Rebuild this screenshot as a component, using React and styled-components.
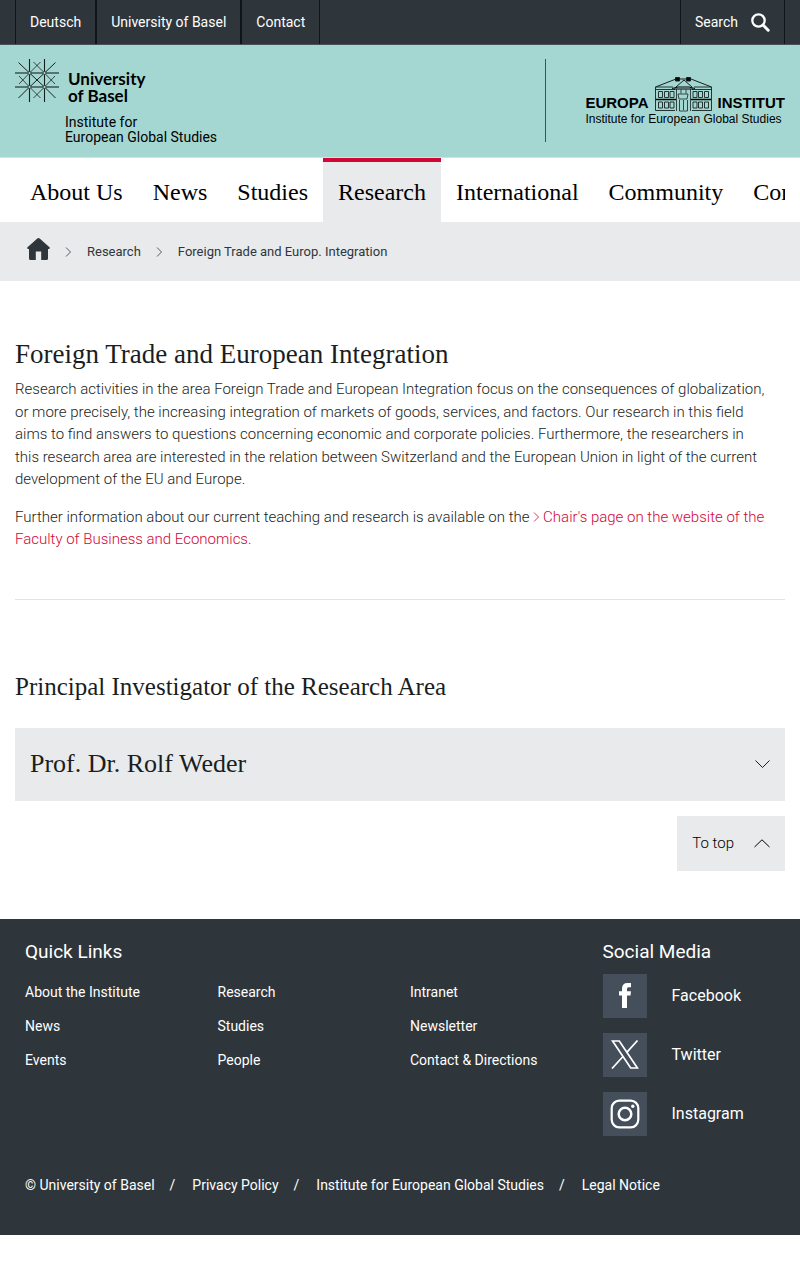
import React from "react";
import styled, { createGlobalStyle } from "styled-components";

const sans = `Roboto, "Liberation Sans", sans-serif`;
const serif = `"Liberation Serif", serif`;

const Global = createGlobalStyle`
  *, *::before, *::after { box-sizing: border-box; }
  body { margin: 0; background: #fff; color: #1a1e21; font-family: ${sans}; }
  a { color: inherit; text-decoration: none; }
  button { font: inherit; color: inherit; border: 0; background: none; padding: 0; cursor: pointer; }
  h1, h2, p, ul { margin: 0; padding: 0; }
  ul { list-style: none; }
  svg { display: block; flex: none; }
`;

const TopBar = styled.div`
  display: flex;
  justify-content: space-between;
  height: 45px;
  padding: 0 15px;
  background: #2e363c;
  border-bottom: 1px solid #465257;
  color: #fff;
  font-size: 14px;
`;

const TopLinks = styled.nav`
  display: flex;
`;

const TopLink = styled.a`
  display: flex;
  align-items: center;
  padding: 0 14px;
  border: solid #101417;
  border-width: 0 1px;
`;

const SearchButton = styled.button`
  display: flex;
  align-items: center;
  gap: 13px;
  padding: 0 14px;
  && {
    border: solid #101417;
    border-width: 0 1px;
  }
`;

const Header = styled.header`
  display: flex;
  justify-content: space-between;
  align-items: flex-start;
  height: 113px;
  padding: 14px 15px 0;
  background: #a4d7d2;
  border-bottom: 1px solid #c9e7e4;
  color: #000;
`;

const UniName = styled.a`
  display: flex;
  align-items: flex-start;
  gap: 9px;
  font: 700 17px/17px Lato, ${sans};
  span { padding-top: 11px; }
`;

const UniUnit = styled.a`
  display: block;
  margin: 11px 0 0 50px;
  font-size: 14px;
  line-height: 15px;
`;

const Institute = styled.a`
  display: block;
  height: 83px;
  padding: 18px 0 0 39px;
  border-left: 1px solid #3d5553;
  font-family: "Liberation Sans", sans-serif;
`;

const InstituteMark = styled.div`
  display: flex;
  align-items: flex-end;
  gap: 6px;
  font-size: 15px;
  font-weight: 700;
  line-height: 18px;
`;

const InstituteSub = styled.div`
  font-size: 12px;
  line-height: 14px;
`;

const MainNav = styled.nav`
  display: flex;
  height: 64px;
  margin: 0 15px;
  overflow: hidden;
`;

const NavItem = styled.a`
  display: flex;
  align-items: center;
  flex: none;
  padding: 0 15px;
  border-top: 4px solid ${(p) => (p.$active ? "#d20537" : "transparent")};
  background: ${(p) => (p.$active ? "#e9eaec" : "transparent")};
  && { color: #000; }
  font: 24px/30px ${serif};
`;

const Breadcrumb = styled.nav`
  display: flex;
  align-items: center;
  gap: 15px;
  height: 59px;
  padding: 0 27px;
  background: #e9eaec;
  color: #2e363c;
  font-size: 13px;
`;

const HomeLink = styled.a`
  padding-bottom: 5px;
`;

const Main = styled.main`
  padding: 58px 15px 48px;
`;

const Title = styled.h1`
  font: 400 27px/30px ${serif};
`;

const Subtitle = styled.h2`
  font: 400 25px/30px ${serif};
`;

const Text = styled.p`
  && { margin-top: ${(p) => p.$top}px; padding-right: 15px; }
  font-size: 15px;
  font-weight: 300;
  line-height: 1.5;
`;

const TextLink = styled.a`
  && { color: #d20537; }
  svg { display: inline-block; margin-right: 3px; }
`;

const Rule = styled.hr`
  margin: 48px 0 72px;
  border: 0;
  border-top: 1px solid #e1e3e5;
`;

const Accordion = styled.button`
  display: flex;
  align-items: center;
  justify-content: space-between;
  width: 100%;
  height: 73px;
  margin: 26px 0 15px;
  && { padding: 0 15px; background: #e9eaec; font: 26px/30px ${serif}; }
`;

const ToTop = styled.a`
  display: flex;
  align-items: center;
  gap: 20px;
  width: max-content;
  height: 55px;
  margin-left: auto;
  padding: 0 15px;
  background: #e9eaec;
  && { color: #000; }
  font-size: 15px;
  font-weight: 300;
`;

const Footer = styled.footer`
  height: 316px;
  padding: 20px 15px 0;
  background: #2e363c;
  color: #fff;
  font-size: 14px;
`;

const FooterGrid = styled.div`
  display: grid;
  grid-template-columns: 3fr 1fr;
`;

const FooterTitle = styled.h2`
  && { padding: 0 10px; }
  font-size: 19px;
  font-weight: 400;
  line-height: 25px;
`;

const QuickLinks = styled.ul`
  display: grid;
  grid-template-columns: repeat(3, 1fr);
  && { margin-top: 11px; }
  line-height: 34px;
  li { padding: 0 10px; }
`;

const SocialList = styled.ul`
  display: grid;
  gap: 15px;
  && { margin-top: 10px; padding-left: 10px; }
`;

const SocialLink = styled.a`
  display: flex;
  align-items: center;
  gap: 25px;
  font-size: 16px;
`;

const SocialIcon = styled.span`
  display: grid;
  place-items: center;
  width: 44px;
  height: 44px;
  background: #454f5b;
`;

const Legal = styled.ul`
  display: flex;
  flex-wrap: wrap;
  && { margin-top: 39px; padding: 0 10px; }
  line-height: 20px;
  li + li::before { content: "/"; margin: 0 17px 0 15px; }
`;

const BaselStar = () => (
  <svg width="44" height="43" viewBox="0 0 44 43" fill="none" stroke="#16201f" strokeWidth="1" aria-hidden="true">
    <path d="M14.5 0v43M29.5 0v43" strokeWidth="1.1" />
    <path d="M0 14H44M0 28H44" stroke="#3d5553" strokeWidth="1.4" />
    <path d="M3.5 3.5L14.5 14M40.5 3.5L29.5 14M3.5 39L14.5 28M40.5 39L29.5 28" />
    <path d="M14.5 14L29.5 28M29.5 14L14.5 28" />
    <path d="M14.5 14L25.5 3M29.5 14L18.5 3M14.5 28L25.5 39M29.5 28L18.5 39" strokeWidth=".8" />
    <path d="M14.5 14L4 25M14.5 28L4 17M29.5 14L40 25M29.5 28L40 17" strokeWidth=".8" />
    <g fill="#a4d7d2" strokeWidth=".6">
      <circle cx="14.5" cy="14" r="1.5" /><circle cx="29.5" cy="14" r="1.5" />
      <circle cx="14.5" cy="28" r="1.5" /><circle cx="29.5" cy="28" r="1.5" />
    </g>
  </svg>
);

const Building = () => (
  <svg width="57" height="35" viewBox="0 0 57 35" fill="none" stroke="#14211f" strokeWidth="1" aria-hidden="true">
    <path d="M.5 10L21 2M56.5 10L36 2M24 2H33M29 3L21 10M29 3L37 10" />
    <path d="M20.500 .5h4v3.500h-4zM31.500 .5h4v3.500h-4z" fill="#000" />
    <path d="M.5 10H18M39 10H56.500M.5 10V33.500H20M56.500 10V33.500H37M0 12.500H20M37 12.500H57" strokeWidth=".9" />
    <path d="M1 22.500H21M36 22.500H56" stroke="#000" strokeWidth="1.500" />
    <path d="M17 11.500L23 10H34L40 11.500M19 12H38" stroke="#000" />
    <path d="M3.500 14.500h4v6h-4zM9.500 14.500h4v6h-4zM15 14.500h4v6h-4zM38 14.500h4v6h-4zM43.500 14.500h4v6h-4zM49.500 14.500h4v6h-4z" strokeWidth=".9" />
    <path d="M3.500 25h4v6h-4zM9.500 25h4v6h-4zM15 25h4v6h-4zM38 25h4v6h-4zM43.500 25h4v6h-4zM49.500 25h4v6h-4z" strokeWidth=".9" />
    <path d="M21.500 12V34M35.500 12V34M23 17h10l-1 5h-8zM24.500 23V34H32.500V23M26 12.500v4M31 12.500v4M28.500 23v10" strokeWidth=".8" />
  </svg>
);

const Chevron = ({ d, w, h, width = 1 }) => (
  <svg width={w} height={h} viewBox={`0 0 ${w} ${h}`} fill="none" stroke="currentColor" strokeWidth={width} aria-hidden="true">
    <path d={d} />
  </svg>
);

const CrumbArrow = () => <Chevron w={7} h={10} d="M1 .5L5.500 5L1 9.500" width={0.8} />;

const SearchIcon = () => (
  <svg width="19" height="19" viewBox="0 0 19 19" fill="none" stroke="#fff" aria-hidden="true">
    <circle cx="7.500" cy="7.500" r="6.200" strokeWidth="2.300" />
    <path d="M12 12L17.200 17.200" strokeWidth="3" strokeLinecap="round" />
  </svg>
);

const HomeIcon = () => (
  <svg width="23" height="22" viewBox="0 0 23 22" fill="#2e363c" aria-hidden="true">
    <path d="M10.300 .5Q11.500-.4 12.700 .5L22.500 9.200Q23.500 10.500 22 11H21V20.500Q21 22 19.500 22H14.200V13.500H8.800V22H3.500Q2 22 2 20.500V11H1Q-.5 10.500 .5 9.200Z" />
  </svg>
);

const FacebookIcon = () => (
  <svg width="12" height="25" viewBox="0 0 12 25" fill="#fff" aria-hidden="true">
    <path d="M3 25V12.500H0V8.300H3V5.700Q3 0 8.500 0H12V4.300H9.500Q8 4.300 8 5.800V8.300H12L11.500 12.500H8V25Z" />
  </svg>
);

const XIcon = () => (
  <svg width="28" height="29" viewBox="0 0 28 29" fill="none" stroke="#fff" strokeWidth="1.700" aria-hidden="true">
    <path d="M1.600 1H8.300L26.400 28H19.700Z" />
    <path d="M26.500 .5L15.800 12.400M12 16.500L1 28.500" />
  </svg>
);

const InstagramIcon = () => (
  <svg width="30" height="30" viewBox="0 0 30 30" fill="none" stroke="#fff" strokeWidth="2.200" aria-hidden="true">
    <rect x="1.700" y="1.700" width="26.600" height="26.600" rx="7.500" />
    <circle cx="15" cy="15" r="6.300" strokeWidth="2.500" />
    <circle cx="22.800" cy="7.200" r="1.700" fill="#fff" stroke="none" />
  </svg>
);

const navItems = ["About Us", "News", "Studies", "Research", "International", "Community", "Continuing Education"];
const quickLinks = [
  "About the Institute", "Research", "Intranet",
  "News", "Studies", "Newsletter",
  "Events", "People", "Contact & Directions",
];
const social = [
  ["Facebook", FacebookIcon],
  ["Twitter", XIcon],
  ["Instagram", InstagramIcon],
];
const legal = ["© University of Basel", "Privacy Policy", "Institute for European Global Studies", "Legal Notice"];

export default function App() {
  return (
    <>
      <Global />
      <TopBar id="top">
        <TopLinks aria-label="Service">
          <TopLink href="#de">Deutsch</TopLink>
          <TopLink href="#unibas">University of Basel</TopLink>
          <TopLink href="#contact">Contact</TopLink>
        </TopLinks>
        <SearchButton type="button">Search<SearchIcon /></SearchButton>
      </TopBar>
      <Header>
        <div>
          <UniName href="#home"><BaselStar /><span>University<br />of Basel</span></UniName>
          <UniUnit href="#home">Institute for<br />European Global Studies</UniUnit>
        </div>
        <Institute href="#institute">
          <InstituteMark><span>EUROPA</span><Building /><span>INSTITUT</span></InstituteMark>
          <InstituteSub>Institute for European Global Studies</InstituteSub>
        </Institute>
      </Header>
      <MainNav aria-label="Main">
        {navItems.map((label) => (
          <NavItem key={label} href="#nav" $active={label === "Research"}>{label}</NavItem>
        ))}
      </MainNav>
      <Breadcrumb aria-label="Breadcrumb">
        <HomeLink href="#home" aria-label="Home"><HomeIcon /></HomeLink>
        <CrumbArrow />
        <a href="#research">Research</a>
        <CrumbArrow />
        <a href="#trade">Foreign Trade and Europ. Integration</a>
      </Breadcrumb>
      <Main>
        <Title>Foreign Trade and European Integration</Title>
        <Text $top={9}>
          Research activities in the area Foreign Trade and European Integration focus on the consequences of
          globalization, or more precisely, the increasing integration of markets of goods, services, and factors. Our
          research in this field aims to find answers to questions concerning economic and corporate policies.
          Furthermore, the researchers in this research area are interested in the relation between Switzerland and the
          European Union in light of the current development of the EU and Europe.
        </Text>
        <Text $top={15}>
          Further information about our current teaching and research is available on the{" "}
          <TextLink href="#chair"><CrumbArrow />Chair's page on the website of the Faculty of Business and Economics.</TextLink>
        </Text>
        <Rule />
        <Subtitle>Principal Investigator of the Research Area</Subtitle>
        <Accordion type="button" aria-expanded="false">
          Prof. Dr. Rolf Weder
          <Chevron w={15} h={9} d="M.5 .5L7.500 7.500L14.500 .5" />
        </Accordion>
        <ToTop href="#top">To top<Chevron w={16} h={9} d="M.5 8L8 .8L15.500 8" /></ToTop>
      </Main>
      <Footer>
        <FooterGrid>
          <div>
            <FooterTitle>Quick Links</FooterTitle>
            <QuickLinks>
              {quickLinks.map((label) => <li key={label}><a href="#quick">{label}</a></li>)}
            </QuickLinks>
          </div>
          <div>
            <FooterTitle>Social Media</FooterTitle>
            <SocialList>
              {social.map(([label, Icon]) => (
                <li key={label}><SocialLink href="#social"><SocialIcon><Icon /></SocialIcon>{label}</SocialLink></li>
              ))}
            </SocialList>
          </div>
        </FooterGrid>
        <Legal>
          {legal.map((label) => <li key={label}><a href="#legal">{label}</a></li>)}
        </Legal>
      </Footer>
    </>
  );
}
